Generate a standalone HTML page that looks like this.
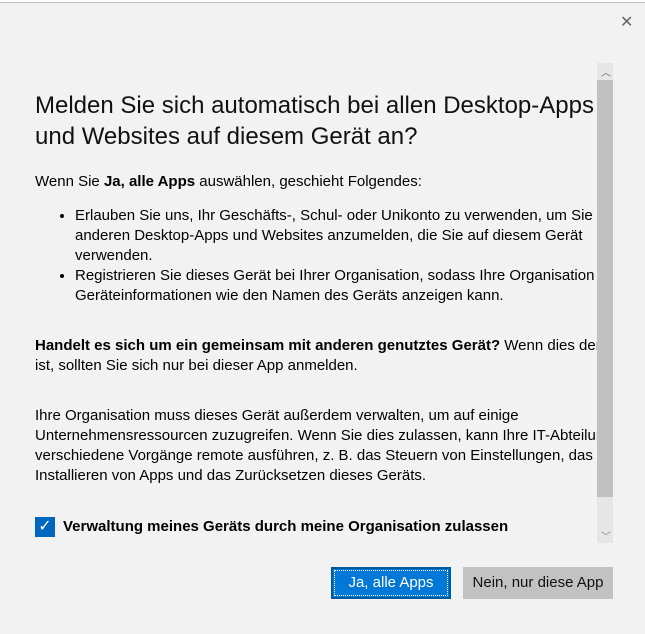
<!DOCTYPE html>
<html><head><meta charset="utf-8"><style>
html,body{margin:0;padding:0}
body{width:645px;height:634px;background:#f2f2f2;position:relative;overflow:hidden;font-family:"Liberation Sans",sans-serif;color:#000}
.top{position:absolute;left:0;top:0;width:645px;height:2px;background:#fff;border-bottom:1px solid #bdbdbd}
.close{position:absolute;left:620px;top:12px;font-size:16px;color:#666}
.content{position:absolute;left:35px;top:0;width:562px;height:545px;overflow:hidden}
.inner{width:600px}
h1{font-weight:normal;font-size:24px;line-height:31px;margin:0;position:absolute;top:90px;width:600px;color:#111}
p{font-size:15px;line-height:20px;margin:0;position:absolute;width:600px}
ul{position:absolute;margin:0;padding-left:40px;left:0;width:560px;font-size:15px;line-height:20px;top:206px}
li{padding-left:0}
.sb{position:absolute;left:597px;top:63px;width:16px;height:480px;background:#e6e6e6}
.thumb{position:absolute;left:597px;top:80px;width:16px;height:417px;background:#c1c1c1}
.cb{position:absolute;left:35px;top:517px;width:20px;height:20px;background:#0067c0;color:#fff;font-size:16px;line-height:20px;text-align:center}
.cbl{position:absolute;left:63px;top:518px;font-size:15px;font-weight:bold}
.b1{position:absolute;left:331px;top:567px;width:120px;height:32px;background:#0078d7;border:2px solid #005a9e;box-sizing:border-box;color:#fff;font-size:15px;line-height:28px;text-align:center;outline:1px dotted #fff;outline-offset:-4px}
.b2{position:absolute;left:463px;top:567px;width:150px;height:32px;background:#c2c2c2;color:#111;font-size:15px;line-height:32px;text-align:center}
</style></head><body>
<div class="top"></div>
<div class="close">✕</div>
<div class="content">
<h1>Melden Sie sich automatisch bei allen Desktop-Apps und Websites auf diesem Gerät an?</h1>
<p style="top:172px">Wenn Sie <b>Ja, alle Apps</b> auswählen, geschieht Folgendes:</p>
<ul><li>Erlauben Sie uns, Ihr Geschäfts-, Schul- oder Unikonto zu verwenden, um Sie bei anderen Desktop-Apps und Websites anzumelden, die Sie auf diesem Gerät verwenden.</li><li>Registrieren Sie dieses Gerät bei Ihrer Organisation, sodass Ihre Organisation Geräteinformationen wie den Namen des Geräts anzeigen kann.</li></ul>
<p style="top:336px"><b>Handelt es sich um ein gemeinsam mit anderen genutztes Gerät?</b> Wenn dies der Fall<br>ist, sollten Sie sich nur bei dieser App anmelden.</p>
<p style="top:406px">Ihre Organisation muss dieses Gerät außerdem verwalten, um auf einige<br>Unternehmensressourcen zuzugreifen. Wenn Sie dies zulassen, kann Ihre IT-Abteilung<br>verschiedene Vorgänge remote ausführen, z. B. das Steuern von Einstellungen, das<br>Installieren von Apps und das Zurücksetzen dieses Geräts.</p>
</div>
<div class="sb"></div><div class="thumb"></div>
<div style="position:absolute;left:601px;top:64px;font-size:10px;color:#666">︿</div>
<div style="position:absolute;left:601px;top:528px;font-size:10px;color:#888">﹀</div>
<div class="cb">✓</div>
<div class="cbl">Verwaltung meines Geräts durch meine Organisation zulassen</div>
<div class="b1">Ja, alle Apps</div>
<div class="b2">Nein, nur diese App</div>
</body></html>
